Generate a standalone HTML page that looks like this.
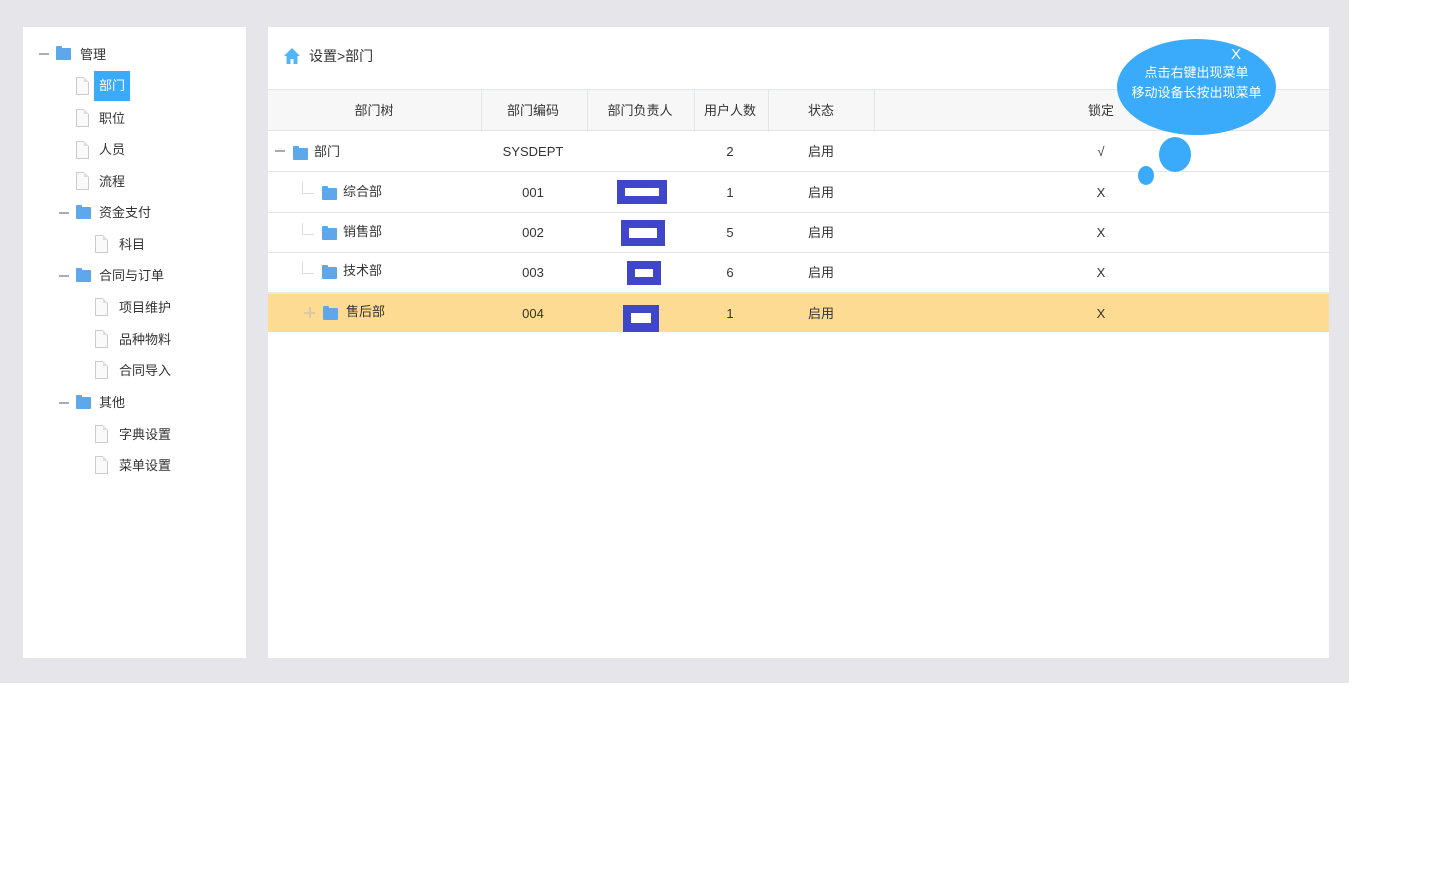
<!DOCTYPE html>
<html><head><meta charset="utf-8"><style>
*{margin:0;padding:0;box-sizing:border-box}
body{width:1446px;height:870px;background:#fff;font-family:"Liberation Sans","Noto Sans CJK SC",sans-serif;font-size:13px;color:#333;position:relative;overflow:hidden}
.bg{position:absolute;left:0;top:0;width:1349px;height:683px;background:#e6e6ea}
.lp{position:absolute;left:23px;top:27px;width:223px;height:631px;background:#fff}
.rp{position:absolute;left:268px;top:27px;width:1061px;height:631px;background:#fff}
.ab{position:absolute;white-space:nowrap}
.fold{position:absolute;width:15px;height:12px;background:#5ea7ea;border-radius:1px}
.fold:before{content:"";position:absolute;left:0;top:-2px;width:6px;height:3px;background:#5ea7ea;border-radius:1px 1px 0 0}
.file{position:absolute;width:13px;height:18px;border:1px solid #ccc;background:#fafafa}
.file:after{content:"";position:absolute;right:-1px;top:-1px;width:0;height:0;border-left:5px solid #ddd;border-top:5px solid #fff}
.minus{position:absolute;width:10px;height:2px;background:#aab}
.t{position:absolute;font-size:13px;line-height:16px}
.hd{position:absolute;left:0;top:62px;width:1061px;height:42px;background:#f7f7f7;border-top:1px solid #e3e6e8;border-bottom:1px solid #e3e6e8}
.row{position:absolute;left:0;width:1061px;border-bottom:1px solid #e3e6e8}
.c{position:absolute;text-align:center;transform:translateX(-50%);line-height:16px}
.vl{position:absolute;top:0;width:1px;height:42px;background:#e3e6e8}
.bx{position:absolute;background:#4046c9}
.bx i{position:absolute;background:#fff}
.ln{position:absolute;width:12px;height:12px;border-left:1px solid #ddd;border-bottom:1px solid #ddd}
</style></head><body>
<div class="bg"></div>
<div class="lp">
 <div class="minus" style="left:16px;top:26px"></div><div class="fold" style="left:33px;top:21px"></div><div class="t" style="left:57px;top:20px">管理</div>
 <div class="file" style="left:53px;top:50px"></div><div class="ab" style="left:71px;top:44px;width:36px;height:30px;background:#3aabfa"></div><div class="t" style="left:76px;top:51px;color:#fff">部门</div>
 <div class="file" style="left:53px;top:82px"></div><div class="t" style="left:76px;top:84px">职位</div>
 <div class="file" style="left:53px;top:114px"></div><div class="t" style="left:76px;top:115px">人员</div>
 <div class="file" style="left:53px;top:145px"></div><div class="t" style="left:76px;top:147px">流程</div>
 <div class="minus" style="left:36px;top:185px"></div><div class="fold" style="left:53px;top:180px"></div><div class="t" style="left:76px;top:178px">资金支付</div>
 <div class="file" style="left:72px;top:208px"></div><div class="t" style="left:96px;top:210px">科目</div>
 <div class="minus" style="left:36px;top:248px"></div><div class="fold" style="left:53px;top:243px"></div><div class="t" style="left:76px;top:241px">合同与订单</div>
 <div class="file" style="left:72px;top:271px"></div><div class="t" style="left:96px;top:273px">项目维护</div>
 <div class="file" style="left:72px;top:303px"></div><div class="t" style="left:96px;top:305px">品种物料</div>
 <div class="file" style="left:72px;top:334px"></div><div class="t" style="left:96px;top:336px">合同导入</div>
 <div class="minus" style="left:36px;top:375px"></div><div class="fold" style="left:53px;top:370px"></div><div class="t" style="left:76px;top:368px">其他</div>
 <div class="file" style="left:72px;top:398px"></div><div class="t" style="left:96px;top:400px">字典设置</div>
 <div class="file" style="left:72px;top:429px"></div><div class="t" style="left:96px;top:431px">菜单设置</div>
</div>
<div class="rp">
 <svg class="ab" style="left:15px;top:20px" width="18" height="18" viewBox="0 0 18 18"><path d="M9 1L1 9h2.5v8h4v-5h3v5h4V9H17z" fill="#4fb6f8"/></svg>
 <div class="t" style="left:41px;top:21px;font-size:14px">设置&gt;部门</div>
 <div class="hd">
  <div class="c" style="left:106px;top:13px">部门树</div><div class="vl" style="left:213px"></div>
  <div class="c" style="left:265px;top:13px">部门编码</div><div class="vl" style="left:319px"></div>
  <div class="c" style="left:372px;top:13px">部门负责人</div><div class="vl" style="left:426px"></div>
  <div class="c" style="left:462px;top:13px">用户人数</div><div class="vl" style="left:500px"></div>
  <div class="c" style="left:553px;top:13px">状态</div><div class="vl" style="left:606px"></div>
  <div class="c" style="left:833px;top:13px">锁定</div>
 </div>
 <div class="row" style="top:104px;height:41px">
  <div class="minus" style="left:7px;top:19px"></div><div class="fold" style="left:25px;top:17px"></div><div class="t" style="left:46px;top:13px">部门</div>
  <div class="c" style="left:265px;top:13px">SYSDEPT</div><div class="c" style="left:462px;top:13px">2</div><div class="c" style="left:553px;top:13px">启用</div><div class="c" style="left:833px;top:13px">√</div>
 </div>
 <div class="row" style="top:145px;height:41px">
  <div class="ln" style="left:34px;top:10px"></div><div class="fold" style="left:54px;top:16px"></div><div class="t" style="left:75px;top:12px">综合部</div>
  <div class="c" style="left:265px;top:13px">001</div><div class="bx" style="left:349px;top:8px;width:50px;height:24px"><i style="left:8px;top:8px;width:34px;height:8px"></i></div>
  <div class="c" style="left:462px;top:13px">1</div><div class="c" style="left:553px;top:13px">启用</div><div class="c" style="left:833px;top:13px">X</div>
 </div>
 <div class="row" style="top:186px;height:40px">
  <div class="ln" style="left:34px;top:10px"></div><div class="fold" style="left:54px;top:15px"></div><div class="t" style="left:75px;top:11px">销售部</div>
  <div class="c" style="left:265px;top:12px">002</div><div class="bx" style="left:353px;top:7px;width:44px;height:26px"><i style="left:8px;top:8px;width:28px;height:10px"></i></div>
  <div class="c" style="left:462px;top:12px">5</div><div class="c" style="left:553px;top:12px">启用</div><div class="c" style="left:833px;top:12px">X</div>
 </div>
 <div class="row" style="top:226px;height:41px;border-bottom:2px solid #e8e8e8">
  <div class="ln" style="left:34px;top:9px"></div><div class="fold" style="left:54px;top:14px"></div><div class="t" style="left:75px;top:10px">技术部</div>
  <div class="c" style="left:265px;top:12px">003</div><div class="bx" style="left:359px;top:8px;width:34px;height:24px"><i style="left:8px;top:8px;width:18px;height:8px"></i></div>
  <div class="c" style="left:462px;top:12px">6</div><div class="c" style="left:553px;top:12px">启用</div><div class="c" style="left:833px;top:12px">X</div>
 </div>
 <div class="row" style="top:267px;height:38px;background:#fddb92;border:none">
  <div class="ab" style="left:36px;top:18px;width:11px;height:2px;background:#ddc9a0"></div><div class="ab" style="left:41px;top:13px;width:2px;height:11px;background:#ddc9a0"></div>
  <div class="fold" style="left:55px;top:14px"></div><div class="t" style="left:78px;top:10px">售后部</div>
  <div class="c" style="left:265px;top:12px">004</div><div class="bx" style="left:355px;top:11px;width:36px;height:27px"><i style="left:8px;top:8px;width:20px;height:10px"></i></div>
  <div class="c" style="left:462px;top:12px">1</div><div class="c" style="left:553px;top:12px">启用</div><div class="c" style="left:833px;top:12px">X</div>
 </div>
</div>
<div class="ab" style="left:1117px;top:39px;width:159px;height:96px;border-radius:50%;background:#3aabfa"></div>
<div class="ab" style="left:1159px;top:137px;width:32px;height:35px;border-radius:50%;background:#3aabfa"></div>
<div class="ab" style="left:1138px;top:166px;width:16px;height:19px;border-radius:50%;background:#3aabfa"></div>
<div class="ab" style="left:1231px;top:46px;color:#fff;font-size:15px">X</div>
<div class="ab" style="left:1117px;top:63px;width:159px;text-align:center;color:#fff;font-size:13px;line-height:20px">点击右键出现菜单<br>移动设备长按出现菜单</div>
</body></html>
